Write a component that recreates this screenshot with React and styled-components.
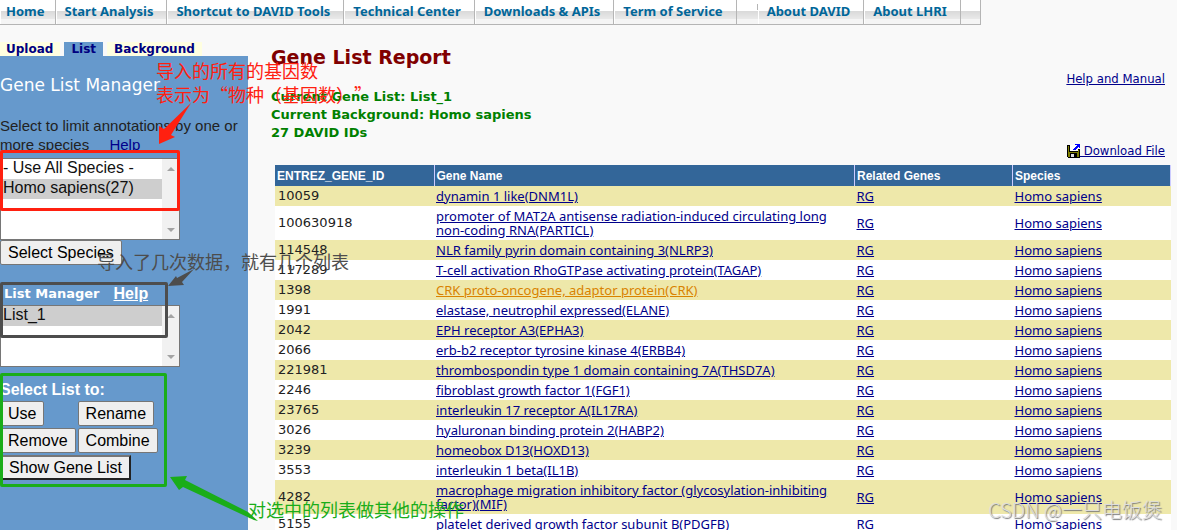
import styled, { createGlobalStyle } from 'styled-components'

const GlobalStyle = createGlobalStyle`
  * {
    box-sizing: border-box;
  }

  html,
  body {
    margin: 0;
    height: 100%;
    overflow: hidden;
  }

  #root {
    height: 100%;
  }

  body {
    background: #f9f9f9;
    color: #222;
    font-family: "Liberation Sans", sans-serif;
    font-size: 16px;
  }

  a {
    color: #00008b;
  }
`

const Page = styled.div`
  position: relative;
  display: flex;
  flex-direction: column;
  height: 100%;
  overflow: hidden;
`

const NavBar = styled.nav`
  display: flex;
  align-self: flex-start;
  height: 25px;
  border-bottom: 1px solid #b5b5b5;
  background: linear-gradient(#fff 0 11px, #d9d9d9 11px, #e9e9e9 19px, #f5f5f5 19px 100%);
`

const NavLink = styled.a`
  padding: 0 13px 0 8px;
  border-right: 1px solid #b5b5b5;
  border-left: 1px solid #fff;
  color: #069;
  font: bold 13px/23px "Noto Sans", sans-serif;
  text-decoration: none;
  white-space: nowrap;

  &:first-child {
    padding: 0 10px 0 5px;
  }
`

const NavGap = styled.span`
  width: 20px;
  border-right: ${(props) => (props.$closed ? '1px solid #b5b5b5' : 'none')};
`

const NavTick = styled.span`
  width: 1px;
  height: 6px;
  margin-top: 4px;
  background: #b5b5b5;
`

const Body = styled.div`
  display: flex;
  flex: 1;
  gap: 23px;
  min-height: 0;
`

const Sidebar = styled.aside`
  display: flex;
  flex-direction: column;
  flex: 0 0 248px;
  padding-top: 17px;
`

const Tabs = styled.div`
  display: flex;
  gap: 4px;
`

const Tab = styled.a`
  padding: 0 7px;
  height: 14px;
  background: ${(props) => (props.$active ? '#69c' : '#ffffe0')};
  color: #000080;
  font: bold 12px/15px "DejaVu Sans", sans-serif;
  text-decoration: none;

  &:first-child {
    padding-left: 6px;
  }
`

const Panel = styled.div`
  flex: 1;
  padding-top: 18px;
  background: #69c;
`

const PanelTitle = styled.h2`
  margin: 0 0 20px;
  color: #fff;
  font: 17px/22px "DejaVu Sans", sans-serif;
`

const Hint = styled.p`
  margin: 0;
  padding-bottom: 4px;
  font-size: 15px;
  line-height: 19px;

  a {
    margin-left: 16px;
  }
`

const ListBoxFrame = styled.div`
  display: flex;
  width: 180px;
  height: ${(props) => props.$height}px;
  border: 1px solid #767676;
`

const ListBoxSelect = styled.select`
  flex: 1;
  min-width: 0;
  padding: 0;
  border: 0;
  border-radius: 0;
  outline: none;
  background: #fff;
  color: #111;
  font: 16px "Liberation Sans", sans-serif;

  option {
    min-height: 20px;
    padding: 0 2px;
    line-height: 20px;
  }
`

const ScrollTrack = styled.svg`
  flex: none;
  width: 17px;
  height: 100%;
  background: #f1f1f1;
`

const Button = styled.button`
  height: 25px;
  padding: 0 7px;
  border: ${(props) => (props.$raised ? '2px solid' : '1px solid')};
  border-color: ${(props) => (props.$raised ? '#767676 #222 #222 #767676' : '#767676')};
  border-radius: ${(props) => (props.$raised ? 0 : 2)}px;
  background: #efefef;
  color: #000;
  font: 16px "Liberation Sans", sans-serif;
`

const ListHeading = styled.div`
  display: flex;
  align-items: center;
  gap: 14px;
  margin-top: 17px;
  padding-left: 4px;
  height: 23px;
  color: #fff;
  font: bold 13px "DejaVu Sans", sans-serif;

  a {
    color: #fff;
    font: bold 16px "Liberation Sans", sans-serif;
  }
`

const Actions = styled.div`
  display: grid;
  grid-template-columns: max-content max-content;
  justify-items: start;
  gap: 2px;
  padding-top: 14px;
`

const ActionsTitle = styled.h3`
  grid-column: 1 / -1;
  margin: 0;
  color: #fff;
  font: bold 16px/18px "Liberation Sans", sans-serif;
`

const WideCell = styled.div`
  grid-column: 1 / -1;
`

const Report = styled.main`
  flex: 1;
  min-width: 0;
  padding: 20px 6px 0 0;
`

const ReportTitle = styled.h1`
  margin: 0 0 1px;
  color: #800000;
  font: bold 19px/24px "DejaVu Sans", sans-serif;
`

const ReportLink = styled.a`
  display: block;
  width: max-content;
  margin: 0 6px 0 auto;
  font: 13px/18px "DejaVu Sans Condensed", "DejaVu Sans", sans-serif;
`

const Summary = styled.div`
  display: flex;
  flex-direction: column;
  color: #008000;
  font: bold 13px/18px "DejaVu Sans", sans-serif;
`

const GeneTable = styled.table`
  width: calc(100% - 4px);
  margin: 5px 0 0 4px;
  border-collapse: collapse;
  table-layout: fixed;

  th {
    height: 21px;
    padding: 0 2px;
    border-right: 1px solid #ccf;
    background: #369;
    color: #fff;
    font: bold 12px/14px "Liberation Sans", sans-serif;
    text-align: left;
  }

  td {
    padding: 3px 2px;
    font: 13px/14px "Noto Sans", sans-serif;
  }

  td:first-child {
    padding-left: 3px;
    font-family: "DejaVu Sans", sans-serif;
  }
`

const GeneRow = styled.tr`
  background: ${(props) => (props.$shaded ? '#eee8aa' : '#fff')};
`

const GeneLink = styled.a`
  color: ${(props) => (props.$hovered ? '#d98200' : '#00008b')};
`

const Note = styled.div`
  position: absolute;
  left: ${(props) => props.$x}px;
  top: ${(props) => props.$y}px;
  color: ${(props) => props.$color};
  font: 18px/24px "Noto Sans CJK SC", sans-serif;
  text-spacing-trim: space-all;
  white-space: pre;
`

const Frame = styled.div`
  position: absolute;
  left: 0;
  top: ${(props) => props.$y}px;
  width: ${(props) => props.$width}px;
  height: ${(props) => props.$height}px;
  border: 3px solid ${(props) => props.$color};
  border-radius: 2px;
  pointer-events: none;
`

const Arrows = styled.svg`
  position: absolute;
  left: 0;
  top: 0;
  pointer-events: none;
`

const Watermark = styled.div`
  position: absolute;
  right: 15px;
  bottom: 7px;
  color: #ddd;
  font: 300 20px/26px "Noto Sans CJK SC", sans-serif;
  text-shadow: 1px 1px 1px #777;
`

const DiskSvg = styled.svg`
  vertical-align: text-bottom;
`

const navItems = [
  'Home',
  'Start Analysis',
  'Shortcut to DAVID Tools',
  'Technical Center',
  'Downloads & APIs',
  'Term of Service',
]

const genes = [
  ['10059', 'dynamin 1 like(DNM1L)'],
  ['100630918', 'promoter of MAT2A antisense radiation-induced circulating long non-coding RNA(PARTICL)'],
  ['114548', 'NLR family pyrin domain containing 3(NLRP3)'],
  ['117289', 'T-cell activation RhoGTPase activating protein(TAGAP)'],
  ['1398', 'CRK proto-oncogene, adaptor protein(CRK)'],
  ['1991', 'elastase, neutrophil expressed(ELANE)'],
  ['2042', 'EPH receptor A3(EPHA3)'],
  ['2066', 'erb-b2 receptor tyrosine kinase 4(ERBB4)'],
  ['221981', 'thrombospondin type 1 domain containing 7A(THSD7A)'],
  ['2246', 'fibroblast growth factor 1(FGF1)'],
  ['23765', 'interleukin 17 receptor A(IL17RA)'],
  ['3026', 'hyaluronan binding protein 2(HABP2)'],
  ['3239', 'homeobox D13(HOXD13)'],
  ['3553', 'interleukin 1 beta(IL1B)'],
  ['4282', 'macrophage migration inhibitory factor (glycosylation-inhibiting factor)(MIF)'],
  ['5155', 'platelet derived growth factor subunit B(PDGFB)'],
]

const DiskIcon = () => (
  <DiskSvg width="13" height="14" viewBox="0 0 13 14" shapeRendering="crispEdges">
    <path d="M0 1h13v13H1L0 13z" fill="#000" />
    <path d="M1 2h1v11H1zM11 6h1v7h-1zM2 8h9v1H2zM2 9h1v4H2zM10 9h1v4h-1z" fill="#808000" />
    <path d="M3 1h10v4h-2v2H3z" fill="#fff" />
    <path d="M4 10h3v3H4z" fill="#ddd" />
    <path d="M8 0h5v4h-1V3h-1v1h-1v1H9v1H6V5h1V4h1V3h1V2h1V1H8z" fill="#00f" />
  </DiskSvg>
)

const ListBox = ({ height, children, ...rest }) => (
  <ListBoxFrame $height={height}>
    <ListBoxSelect {...rest}>{children}</ListBoxSelect>
    <ScrollTrack aria-hidden="true">
      <path d="M5 12l4-4 4 4z" fill="#a3a3a3" />
      <svg y="100%" overflow="visible">
        <path d="M5-11l4 4 4-4z" fill="#a3a3a3" />
      </svg>
    </ScrollTrack>
  </ListBoxFrame>
)

const App = () => (
  <Page>
    <GlobalStyle />
    <NavBar>
      {navItems.map((item) => (
        <NavLink href="#" key={item}>{item}</NavLink>
      ))}
      <NavGap />
      <NavTick />
      <NavLink href="#">About DAVID</NavLink>
      <NavLink href="#">About LHRI</NavLink>
      <NavGap $closed />
    </NavBar>

    <Body>
      <Sidebar>
        <Tabs>
          <Tab href="#">Upload</Tab>
          <Tab href="#" $active>List</Tab>
          <Tab href="#">Background</Tab>
        </Tabs>
        <Panel>
          <PanelTitle>Gene List Manager</PanelTitle>
          <Hint>
            Select to limit annotations by one or more species <a href="#">Help</a>
          </Hint>
          <ListBox height={82} size={4} aria-label="Species" defaultValue="human">
            <option value="all">- Use All Species -</option>
            <option value="human">Homo sapiens(27)</option>
          </ListBox>
          <Button>Select Species</Button>
          <ListHeading>
            List Manager <a href="#">Help</a>
          </ListHeading>
          <ListBox height={62} size={3} aria-label="List Manager" defaultValue="1">
            <option value="1">List_1</option>
          </ListBox>
          <Actions>
            <ActionsTitle>Select List to:</ActionsTitle>
            <Button>Use</Button>
            <Button>Rename</Button>
            <Button>Remove</Button>
            <Button>Combine</Button>
            <WideCell>
              <Button $raised>Show Gene List</Button>
            </WideCell>
          </Actions>
        </Panel>
      </Sidebar>

      <Report>
        <ReportTitle>Gene List Report</ReportTitle>
        <ReportLink href="#">Help and Manual</ReportLink>
        <Summary>
          <span>Current Gene List: List_1</span>
          <span>Current Background: Homo sapiens</span>
          <span>27 DAVID IDs</span>
        </Summary>
        <ReportLink href="#"><DiskIcon /> Download File</ReportLink>
        <GeneTable>
          <colgroup>
            <col width="159" />
            <col />
            <col width="158" />
            <col width="158" />
          </colgroup>
          <thead>
            <tr>
              <th>ENTREZ_GENE_ID</th>
              <th>Gene Name</th>
              <th>Related Genes</th>
              <th>Species</th>
            </tr>
          </thead>
          <tbody>
            {genes.map(([id, name], i) => (
              <GeneRow key={id} $shaded={i % 2 === 0}>
                <td>{id}</td>
                <td><GeneLink href="#" $hovered={id === '1398'}>{name}</GeneLink></td>
                <td><GeneLink href="#">RG</GeneLink></td>
                <td><GeneLink href="#">Homo sapiens</GeneLink></td>
              </GeneRow>
            ))}
          </tbody>
        </GeneTable>
      </Report>
    </Body>

    <Frame $y={150} $width={180} $height={61} $color="#ff2010" />
    <Frame $y={282} $width={168} $height={56} $color="#4d4d4d" />
    <Frame $y={373} $width={167} $height={114} $color="#1aad19" />
    <Note $x={156} $y={58} $color="#ff2010">{'导入的所有的基因数\n表示为“物种（基因数）”'}</Note>
    <Note $x={97} $y={249} $color="#4d4d4d">导入了几次数据，就有几个列表</Note>
    <Note $x={248} $y={497} $color="#1aad19">对选中的列表做其他的操作</Note>
    <Arrows width="260" height="530" viewBox="0 0 260 530">
      <path d="M191 103L164 129L159 126L159 144L175 137L171 135z" fill="#ff2010" />
      <path d="M194 269L177 278L176 276L168 286L184 285L182 282z" fill="#4d4d4d" />
      <path d="M258 521L248 512L185 480L187 476L170 477L179 490L183 487L254 520z" fill="#1aad19" />
    </Arrows>
    <Watermark>CSDN @一只电饭煲</Watermark>
  </Page>
)

export default App
